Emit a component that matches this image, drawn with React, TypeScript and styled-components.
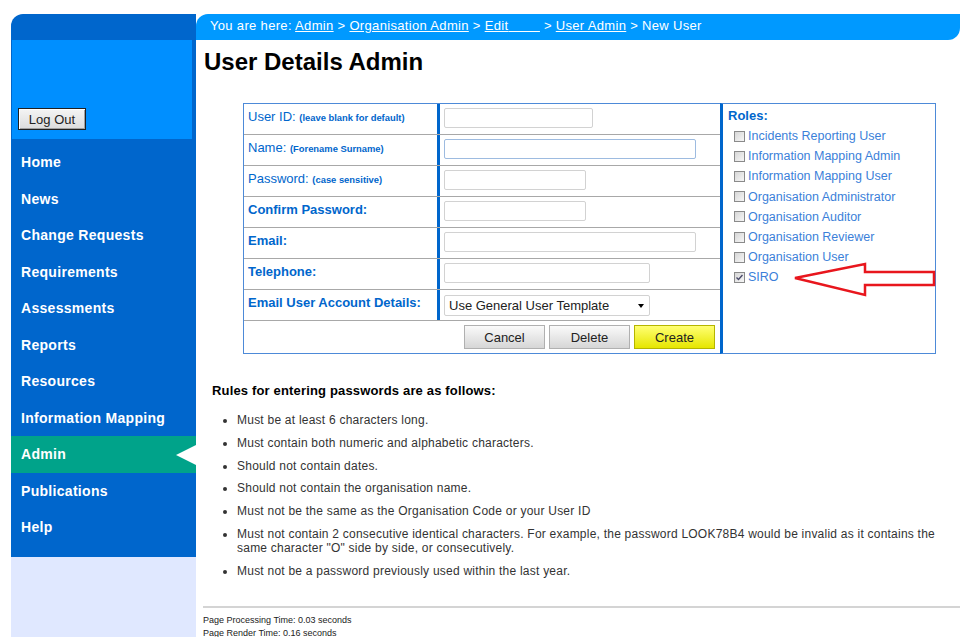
import React from 'react';
import styled, { createGlobalStyle } from 'styled-components';

const GlobalStyle = createGlobalStyle`
  html, body {
    margin: 0;
    padding: 0;
    background: #ffffff;
  }
  body {
    font-family: "Liberation Sans", Arial, sans-serif;
    color: #222;
  }
  * {
    box-sizing: border-box;
  }
`;

const Page = styled.div`
  min-height: 100vh;
  display: flex;
  flex-direction: column;
  padding: 14px 0 0 11px;
  overflow: hidden;
`;

const TopBand = styled.div`
  display: flex;
  height: 26px;
`;

const TopCorner = styled.div`
  width: 185px;
  background: #0066cc;
  border-top-left-radius: 12px;
`;

const Breadcrumb = styled.div`
  flex: 1;
  background: #0099ff;
  border-radius: 12px 0 12px 0;
  color: #ffffff;
  font-size: 13px;
  letter-spacing: 0.33px;
  line-height: 24px;
  padding-left: 14px;
  white-space: pre;
`;

const Crumb = styled.a`
  color: #ffffff;
  text-decoration: underline;
`;

const Body = styled.div`
  flex: 1;
  display: flex;
`;

const Sidebar = styled.div`
  width: 185px;
  display: flex;
  flex-direction: column;
  background: #0066cc;
`;

const LogoutPanel = styled.div`
  height: 99px;
  margin: 0 4px 0 1px;
  background: #008fff;
  display: flex;
  align-items: flex-end;
  padding: 0 0 9px 6px;
`;

const LogOutButton = styled.button`
  width: 68px;
  height: 22px;
  font-family: "Liberation Sans", Arial, sans-serif;
  font-size: 13px;
  color: #222;
  background: linear-gradient(#f4f4f4, #dcdcdc);
  border: 1px solid #202020;
  box-shadow: inset 1px 1px 0 #ffffff, inset -1px -1px 0 #a0a0a0;
  padding: 0;
`;

const Nav = styled.nav`
  padding: 5px 0 11px;
`;

const NavItem = styled.div<{ active?: boolean }>`
  position: relative;
  height: 36.5px;
  display: flex;
  align-items: center;
  padding-left: 10px;
  font-size: 14px;
  font-weight: bold;
  letter-spacing: 0.3px;
  color: #ffffff;
  background: ${({ active }) => (active ? '#00a38a' : 'transparent')};
`;

const NavPointer = styled.span`
  position: absolute;
  right: 0;
  top: 9px;
  width: 0;
  height: 0;
  border-top: 10px solid transparent;
  border-bottom: 10px solid transparent;
  border-right: 20px solid #ffffff;
`;

const SidebarFill = styled.div`
  flex: 1;
  background: #e0e8ff;
`;

const Main = styled.main`
  flex: 1;
  display: flex;
  flex-direction: column;
`;

const Title = styled.h1`
  margin: 8px 0 0 8px;
  font-size: 24px;
  line-height: 28px;
  font-weight: bold;
  color: #000;
`;

const FormArea = styled.div`
  display: flex;
  width: 693px;
  margin: 27px 0 0 47px;
`;

const FormTable = styled.div`
  width: 477px;
  border: 1px solid #4d8ad8;
  border-right: none;
`;

const Row = styled.div`
  display: flex;
  height: 31px;
  border-bottom: 1px solid #a8a8a8;
`;

const LabelCell = styled.div<{ bold?: boolean }>`
  width: 196px;
  border-right: 3px solid #0066cc;
  padding: 5px 0 0 4px;
  font-size: 13px;
  line-height: 15px;
  font-weight: ${({ bold }) => (bold ? 'bold' : 'normal')};
  color: #0066cc;
  white-space: nowrap;
`;

const Hint = styled.span`
  font-size: 9.4px;
  font-weight: bold;
`;

const FieldCell = styled.div`
  flex: 1;
  padding: 4px 0 0 4px;
`;

const TextInput = styled.input<{ w: number; focused?: boolean }>`
  display: block;
  width: ${({ w }) => w}px;
  height: 20px;
  border: 1px solid ${({ focused }) => (focused ? '#9dbbe0' : '#d2d2d2')};
  border-radius: 2px;
  background: #ffffff;
  outline: none;
`;

const SelectWrap = styled.div`
  position: relative;
  width: 206px;
  height: 21px;
  margin-top: 1px;
`;

const Select = styled.select`
  appearance: none;
  width: 100%;
  height: 100%;
  border: 1px solid #d2d2d2;
  border-radius: 2px;
  background: #ffffff;
  font-family: "Liberation Sans", Arial, sans-serif;
  font-size: 13px;
  color: #222;
  padding: 0 0 0 4px;
`;

const SelectArrow = styled.span`
  position: absolute;
  right: 6px;
  top: 9px;
  width: 0;
  height: 0;
  border-left: 3px solid transparent;
  border-right: 3px solid transparent;
  border-top: 4px solid #000;
  pointer-events: none;
`;

const ButtonRow = styled.div`
  display: flex;
  justify-content: flex-end;
  gap: 4px;
  height: 32px;
  padding: 4px 5px 0 0;
`;

const ActionButton = styled.button<{ primary?: boolean }>`
  width: 81px;
  height: 24px;
  font-family: "Liberation Sans", Arial, sans-serif;
  font-size: 13px;
  color: #222;
  border: 1px solid ${({ primary }) => (primary ? '#b5b500' : '#b0b0b0')};
  background: ${({ primary }) =>
    primary ? 'linear-gradient(#ffff73, #e6e600)' : 'linear-gradient(#fafafa, #d6d6d6)'};
  padding: 0;
`;

const RolesPanel = styled.div`
  position: relative;
  width: 216px;
  border: 1px solid #4d8ad8;
  border-left: 3px solid #0066cc;
  padding: 4px 0 0 0;
`;

const RolesTitle = styled.div`
  font-size: 13px;
  line-height: 16px;
  font-weight: bold;
  color: #0066cc;
  padding-left: 5px;
  margin-bottom: 2px;
`;

const RoleItem = styled.label`
  display: flex;
  align-items: center;
  height: 20.2px;
  padding-left: 11px;
  font-size: 12.5px;
  color: #3b7fd9;
`;

const CheckBox = styled.span<{ checked?: boolean }>`
  width: 11px;
  height: 11px;
  margin-right: 3px;
  border: 1px solid #8a8a8a;
  background: linear-gradient(135deg, #d6d6d6, #f6f6f6);
  display: flex;
  align-items: center;
  justify-content: center;
`;

const ArrowOverlay = styled.svg`
  position: absolute;
  left: 66px;
  top: 154px;
`;

const RulesTitle = styled.div`
  margin: 29px 0 0 16px;
  font-size: 13px;
  line-height: 16px;
  font-weight: bold;
  letter-spacing: 0.16px;
  color: #000;
`;

const RulesList = styled.ul`
  margin: 14px 20px 0 0;
  padding-left: 41px;
  list-style: disc;
  font-size: 12px;
  line-height: 14px;
  letter-spacing: 0.23px;
  color: #333;
`;

const Rule = styled.li`
  margin-bottom: 8.8px;
  &:last-child {
    margin-bottom: 0;
  }
`;

const Footer = styled.footer`
  margin: 28px 0 0 7px;
  border-top: 2px solid #d4d4d4;
  padding-top: 6px;
  font-size: 9px;
  line-height: 13px;
  color: #222;
`;

const navItems = [
  'Home',
  'News',
  'Change Requests',
  'Requirements',
  'Assessments',
  'Reports',
  'Resources',
  'Information Mapping',
  'Admin',
  'Publications',
  'Help',
];

const fields: { label: string; hint?: string; width?: number; focused?: boolean; type?: string }[] = [
  { label: 'User ID:', hint: '(leave blank for default)', width: 149 },
  { label: 'Name:', hint: '(Forename Surname)', width: 252, focused: true },
  { label: 'Password:', hint: '(case sensitive)', width: 142, type: 'password' },
  { label: 'Confirm Password:', width: 142, type: 'password' },
  { label: 'Email:', width: 252 },
  { label: 'Telephone:', width: 206 },
];

const roles = [
  { name: 'Incidents Reporting User' },
  { name: 'Information Mapping Admin' },
  { name: 'Information Mapping User' },
  { name: 'Organisation Administrator' },
  { name: 'Organisation Auditor' },
  { name: 'Organisation Reviewer' },
  { name: 'Organisation User' },
  { name: 'SIRO', checked: true },
];

const rules = [
  'Must be at least 6 characters long.',
  'Must contain both numeric and alphabetic characters.',
  'Should not contain dates.',
  'Should not contain the organisation name.',
  'Must not be the same as the Organisation Code or your User ID',
  'Must not contain 2 consecutive identical characters. For example, the password LOOK78B4 would be invalid as it contains the same character "O" side by side, or consecutively.',
  'Must not be a password previously used within the last year.',
];

const App: React.FC = () => {
  return (
    <>
      <GlobalStyle />
      <Page>
        <TopBand>
          <TopCorner />
          <Breadcrumb>
            You are here: <Crumb>Admin</Crumb> &gt; <Crumb>Organisation Admin</Crumb> &gt;{' '}
            <Crumb>Edit{'\u00a0'.repeat(8)}</Crumb> &gt; <Crumb>User Admin</Crumb> &gt; New User
          </Breadcrumb>
        </TopBand>
        <Body>
          <Sidebar>
            <LogoutPanel>
              <LogOutButton>Log Out</LogOutButton>
            </LogoutPanel>
            <Nav>
              {navItems.map((item) => (
                <NavItem key={item} active={item === 'Admin'}>
                  {item}
                  {item === 'Admin' && <NavPointer />}
                </NavItem>
              ))}
            </Nav>
            <SidebarFill />
          </Sidebar>

          <Main>
            <Title>User Details Admin</Title>

            <FormArea>
              <FormTable>
                {fields.map((f) => (
                  <Row key={f.label}>
                    <LabelCell bold={!f.hint}>
                      {f.label} {f.hint && <Hint>{f.hint}</Hint>}
                    </LabelCell>
                    <FieldCell>
                      <TextInput w={f.width ?? 200} focused={f.focused} type={f.type ?? 'text'} />
                    </FieldCell>
                  </Row>
                ))}
                <Row>
                  <LabelCell bold>Email User Account Details:</LabelCell>
                  <FieldCell>
                    <SelectWrap>
                      <Select defaultValue="general">
                        <option value="general">Use General User Template</option>
                      </Select>
                      <SelectArrow />
                    </SelectWrap>
                  </FieldCell>
                </Row>
                <ButtonRow>
                  <ActionButton>Cancel</ActionButton>
                  <ActionButton>Delete</ActionButton>
                  <ActionButton primary>Create</ActionButton>
                </ButtonRow>
              </FormTable>

              <RolesPanel>
                <RolesTitle>Roles:</RolesTitle>
                {roles.map((r) => (
                  <RoleItem key={r.name}>
                    <CheckBox checked={r.checked}>
                      {r.checked && (
                        <svg width="7" height="7" viewBox="0 0 7 7">
                          <path d="M0.5 3.5 L2.5 5.5 L6.5 1" stroke="#4a4a6a" strokeWidth="1.4" fill="none" />
                        </svg>
                      )}
                    </CheckBox>
                    {r.name}
                  </RoleItem>
                ))}
                {/* red callout arrow pointing at the SIRO role */}
                <ArrowOverlay width="150" height="40" viewBox="0 0 150 40">
                  <path
                    d="M6 20 L76 6 L76 14 L145 14 L145 27 L76 27 L76 37 Z"
                    fill="none"
                    stroke="#e8161d"
                    strokeWidth="2.5"
                    strokeLinejoin="miter"
                  />
                </ArrowOverlay>
              </RolesPanel>
            </FormArea>

            <RulesTitle>Rules for entering passwords are as follows:</RulesTitle>
            <RulesList>
              {rules.map((r) => (
                <Rule key={r}>{r}</Rule>
              ))}
            </RulesList>

            <Footer>
              <div>Page Processing Time: 0.03 seconds</div>
              <div>Page Render Time: 0.16 seconds</div>
            </Footer>
          </Main>
        </Body>
      </Page>
    </>
  );
};

export default App;
